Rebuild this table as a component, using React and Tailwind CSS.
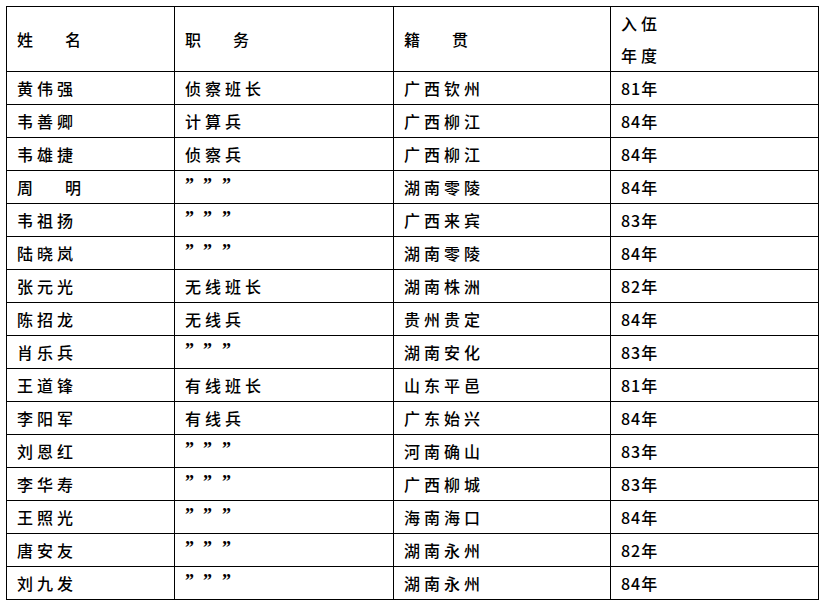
const ROWS = [
  ["黄伟强", "侦察班长", "广西钦州", "81"],
  ["韦善卿", "计算兵", "广西柳江", "84"],
  ["韦雄捷", "侦察兵", "广西柳江", "84"],
  ["周明", null, "湖南零陵", "84"],
  ["韦祖扬", null, "广西来宾", "83"],
  ["陆晓岚", null, "湖南零陵", "84"],
  ["张元光", "无线班长", "湖南株洲", "82"],
  ["陈招龙", "无线兵", "贵州贵定", "84"],
  ["肖乐兵", null, "湖南安化", "83"],
  ["王道锋", "有线班长", "山东平邑", "81"],
  ["李阳军", "有线兵", "广东始兴", "84"],
  ["刘恩红", null, "河南确山", "83"],
  ["李华寿", null, "广西柳城", "83"],
  ["王照光", null, "海南海口", "84"],
  ["唐安友", null, "湖南永州", "82"],
  ["刘九发", null, "湖南永州", "84"],
];

function Spread({ a, b }) {
  return (
    <span className="inline-flex">
      <span className="w-[48px]">{a}</span>
      <span>{b}</span>
    </span>
  );
}

function Ditto() {
  return (
    <span className="flex items-start h-full font-['Liberation_Serif',serif] font-bold text-[18px] leading-[20px] tracking-normal">
      <span className="w-[18px]">”</span>
      <span className="w-[19px]">”</span>
      <span>”</span>
    </span>
  );
}

const cell = "border border-black px-[10px] align-middle";

export default function App() {
  return (
    <div className="w-[823px] h-[608px] bg-white pt-[6px] pl-[6px] font-['Noto_Sans_CJK_SC',sans-serif] font-medium text-[16px] text-black tracking-[4px]">
      <table className="border-collapse table-fixed w-[812px]">
        <colgroup>
          <col className="w-[168px]" />
          <col className="w-[219px]" />
          <col className="w-[217px]" />
          <col className="w-[208px]" />
        </colgroup>
        <thead>
          <tr className="h-[65px]">
            <td className={cell}>
              <Spread a="姓" b="名" />
            </td>
            <td className={cell}>
              <Spread a="职" b="务" />
            </td>
            <td className={cell}>
              <Spread a="籍" b="贯" />
            </td>
            <td className={cell + " leading-[32px]"}>
              <div>入伍</div>
              <div>年度</div>
            </td>
          </tr>
        </thead>
        <tbody>
          {ROWS.map((r, i) => (
            <tr key={i} className="h-[33px]">
              <td className={cell + " leading-[20px]"}>
                {r[0] === "周明" ? <Spread a="周" b="明" /> : r[0]}
              </td>
              <td className={cell + " leading-[20px] " + (r[1] ? "" : "align-top pt-[4px]")}>
                {r[1] ?? <Ditto />}
              </td>
              <td className={cell + " leading-[20px]"}>{r[2]}</td>
              <td className={cell + " leading-[20px]"}>
                <span className="tracking-[1px]">{r[3]}</span>
                年
              </td>
            </tr>
          ))}
        </tbody>
      </table>
    </div>
  );
}
